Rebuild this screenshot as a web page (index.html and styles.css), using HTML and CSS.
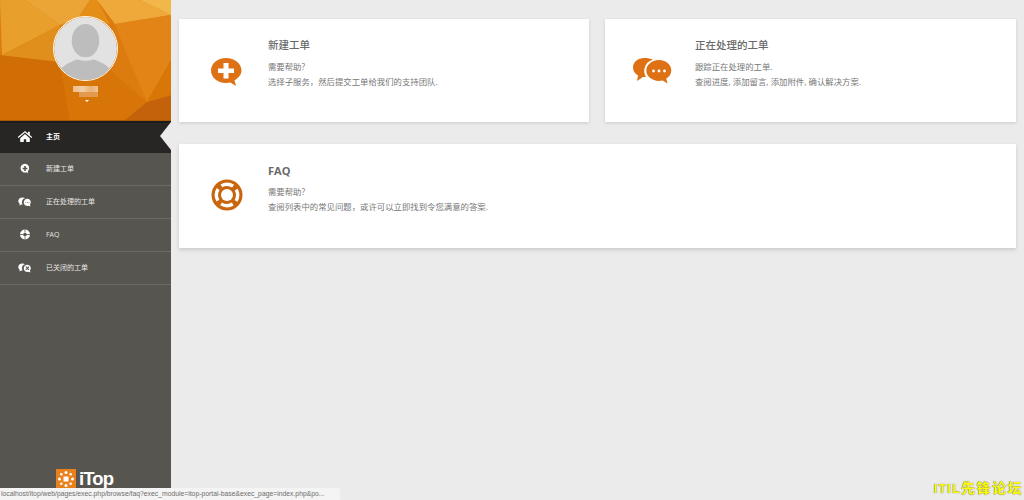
FILE: index.html
```html
<!DOCTYPE html>
<html lang="zh">
<head>
<meta charset="utf-8">
<title>iTop</title>
<link rel="stylesheet" href="styles.css">
</head>
<body>
<div class="page">
  <aside class="sidebar">
    <header class="profile">
      <svg class="profile-bg" viewBox="0 0 171 120" preserveAspectRatio="none" aria-hidden="true">
        <rect width="171" height="120" fill="#dc7c10"/>
        <polygon points="0,0 25,0 60,25 2,55" fill="#e99f2c"/>
        <polygon points="25,0 90,0 78,18 60,25" fill="#eba436"/>
        <polygon points="78,18 90,0 97,0 110,24" fill="#e48e18"/>
        <polygon points="97,0 140,0 171,15 115,24" fill="#eea93a"/>
        <polygon points="140,0 171,0 171,15" fill="#f1b748"/>
        <polygon points="115,24 171,15 171,60 147,102 125,50" fill="#e28516"/>
        <polygon points="0,55 60,62 70,120 0,120" fill="#d06d05"/>
        <polygon points="0,55 2,55 60,25 60,62" fill="#e18f1c"/>
        <polygon points="60,62 110,70 147,102 125,120 70,120" fill="#d87508"/>
        <polygon points="147,102 171,95 171,120 125,120" fill="#c3620a"/>
        <polygon points="147,102 171,60 171,95" fill="#d87608"/>
      </svg>
      <div class="avatar">
        <svg viewBox="0 0 64 64" aria-hidden="true">
          <circle cx="32" cy="32" r="32" fill="#e2e2e2"/>
          <ellipse cx="32" cy="24" rx="14" ry="17" fill="#bdbdbd"/>
          <path d="M7 54c3-6 10-8 17-11 3 2 13 2 16 0 7 3 14 5 17 11a32 32 0 0 1-50 0z" fill="#bdbdbd"/>
        </svg>
      </div>
      <div class="user-name"><span></span><span></span></div>
      <div class="caret"></div>
    </header>
    <nav class="menu">
      <a class="menu-item is-active">
        <svg class="menu-icon" viewBox="0 0 20 16" aria-hidden="true"><path fill="#fff" d="M10 1 1 8.600l1 1.200L10 3l8 6.800 1-1.200-3-2.600V2h-2.200v2.200zM4 10.200V15h4.500v-3.500h3V15H16v-4.800L10 5z"/></svg>
        <span>主页</span>
      </a>
      <a class="menu-item">
        <svg class="menu-icon" viewBox="0 0 20 16" aria-hidden="true"><path fill="#fff" d="M10 2a5.500 5.500 0 1 0 2 10.600l2 1.200-.5-2.300A5.500 5.500 0 0 0 10 2z"/><path fill="#575550" d="M9 5h2v2h2v2h-2v2H9V9H7V7h2z"/></svg>
        <span>新建工单</span>
      </a>
      <a class="menu-item">
        <svg class="menu-icon" viewBox="0 0 20 16" aria-hidden="true"><path fill="#fff" d="M6 3a4.500 4.500 0 0 0-2.500 8.200L3 13l2.500-1.200H7A5 5 0 0 1 10 4a4.500 4.500 0 0 0-4-1z"/><path fill="#fff" d="M13 4.500a4.500 4.500 0 1 0 1.500 8.700l2.300 1-.6-2.300A4.500 4.500 0 0 0 13 4.500z"/><path fill="#575550" d="M10.500 8.500h1v1h-1zM12.500 8.500h1v1h-1zM14.500 8.500h1v1h-1z"/></svg>
        <span>正在处理的工单</span>
      </a>
      <a class="menu-item">
        <svg class="menu-icon" viewBox="0 0 20 16" aria-hidden="true"><circle cx="10" cy="8" r="6.200" fill="#fff"/><circle cx="10" cy="8" r="2.300" fill="#575550"/><path stroke="#575550" stroke-width="1" d="M10 1.500v4M10 10.500v4M3.500 8h4M12.500 8h4"/></svg>
        <span>FAQ</span>
      </a>
      <a class="menu-item">
        <svg class="menu-icon" viewBox="0 0 20 16" aria-hidden="true"><path fill="#fff" d="M6 3a4.500 4.500 0 0 0-2.500 8.200L3 13l2.500-1.200H7A5 5 0 0 1 10 4a4.500 4.500 0 0 0-4-1z"/><path fill="#fff" d="M13 4.500a4.500 4.500 0 1 0 1.500 8.700l2.300 1-.6-2.300A4.500 4.500 0 0 0 13 4.500z"/><path stroke="#575550" stroke-width="1.300" d="m11 7 4 4m0-4-4 4"/></svg>
        <span>已关闭的工单</span>
      </a>
    </nav>
    <div class="brand">
      <svg class="brand-mark" viewBox="0 0 20 20" aria-hidden="true">
        <rect width="20" height="20" fill="#e8801e"/>
        <rect x="7.500" y="7.500" width="5" height="5" fill="#fff"/>
        <g fill="#fff">
          <circle cx="10" cy="3.500" r="1.500"/><circle cx="10" cy="16.500" r="1.500"/>
          <circle cx="3.500" cy="10" r="1.500"/><circle cx="16.500" cy="10" r="1.500"/>
          <circle cx="5.300" cy="5.300" r="1.300"/><circle cx="14.700" cy="5.300" r="1.300"/>
          <circle cx="5.300" cy="14.700" r="1.300"/><circle cx="14.700" cy="14.700" r="1.300"/>
        </g>
      </svg>
      <span class="brand-name">iTop</span>
    </div>
  </aside>
  <main class="content">
    <section class="tile">
      <div class="tile-icon">
        <svg viewBox="0 0 34 30" aria-hidden="true"><path fill="#dd7113" d="M16 0C7.200 0 1 5.700 1 12.500S7.200 25 16 25c1.500 0 3-.2 4.300-.5L26 28l-1.500-5.700C28.500 20 31.500 16.500 31.500 12.500 31.500 5.700 24.800 0 16 0z"/><path fill="#fff" d="M13.500 5h5v5.500H24v4.500h-5.500v5.500h-5V15H8v-4.500h5.500z"/></svg>
      </div>
      <div class="tile-body">
        <h2>新建工单</h2>
        <p>需要帮助?</p>
        <p>选择子服务，然后提交工单给我们的支持团队.</p>
      </div>
    </section>
    <section class="tile">
      <div class="tile-icon">
        <svg viewBox="0 0 40 28" aria-hidden="true"><path fill="#dd7113" d="M11 0C5 0 0 4 0 9.500c0 3.500 2 6.500 5 8L4 23l6-4h3C9 13 12 3 20 2c-2-1.500-5-2-9-2z"/><path fill="#dd7113" stroke="#fff" stroke-width="1.200" d="M26 1.500c-7.500 0-13.300 5-13.300 11s5.800 11 13.300 11c1.300 0 2.500-.1 3.600-.4l5.900 4-1.600-6.300c3-2 5-4.800 5-8.300 0-6-5.500-11-12.900-11z"/><g fill="#fff"><circle cx="20.500" cy="13" r="1.400"/><circle cx="26" cy="13" r="1.400"/><circle cx="31.500" cy="13" r="1.400"/></g></svg>
      </div>
      <div class="tile-body tile-body-wide-icon">
        <h2>正在处理的工单</h2>
        <p>跟踪正在处理的工单.</p>
        <p>查阅进度, 添加留言, 添加附件, 确认解决方案.</p>
      </div>
    </section>
    <section class="tile tile-full">
      <div class="tile-icon">
        <svg viewBox="0 0 32 32" aria-hidden="true"><circle cx="16" cy="16" r="15.500" fill="#c9650f"/><circle cx="16" cy="16" r="6" fill="#fff"/><circle cx="16" cy="16" r="10.700" fill="none" stroke="#fff" stroke-width="3.400" stroke-dasharray="12.300 4.500" stroke-dashoffset="6.150"/></svg>
      </div>
      <div class="tile-body">
        <h2 class="latin">FAQ</h2>
        <p>需要帮助?</p>
        <p>查阅列表中的常见问题，或许可以立即找到令您满意的答案.</p>
      </div>
    </section>
  </main>
</div>
<div class="status-url">localhost/itop/web/pages/exec.php/browse/faq?exec_module=itop-portal-base&amp;exec_page=index.php&amp;po...</div>
<div class="watermark"><span class="watermark-latin">ITIL</span><span>先锋论坛</span></div>
</body>
</html>
```
FILE: styles.css
```css
* { box-sizing: border-box; }
html, body { margin: 0; height: 100%; overflow: hidden; }
body {
  background: #ebebeb;
  color: #777;
  font-family: "Open Sans", "Noto Sans CJK SC", sans-serif;
}
.page { display: flex; height: 500px; }

.sidebar {
  display: flex;
  flex-direction: column;
  width: 171px;
  flex: none;
  background: #575550;
}
.profile {
  position: relative;
  height: 121px;
  display: flex;
  flex-direction: column;
  align-items: center;
  padding-top: 16px;
  border-bottom: 1px solid #a85a08;
  overflow: hidden;
}
.profile-bg { position: absolute; inset: 0; width: 100%; height: 100%; }
.avatar {
  position: relative;
  width: 65px;
  height: 65px;
  border: 1px solid #fff;
  border-radius: 50%;
  overflow: hidden;
}
.avatar svg { display: block; width: 100%; height: 100%; }
.user-name {
  position: relative;
  display: flex;
  flex-direction: column;
  align-items: center;
  margin-top: 5px;
}
.user-name span:first-child { width: 25px; height: 6px; background: linear-gradient(90deg, #efbd8a, #f3cfa6 40%, #ecb273 70%, #f0c596); }
.user-name span:last-child { width: 19px; height: 5px; margin-left: 6px; background: #e39a4e; }
.caret {
  position: relative;
  width: 0;
  height: 0;
  margin-top: 3px;
  margin-left: 2px;
  border: 2.500px solid transparent;
  border-top-color: #fff;
  border-bottom: 0;
}
.menu { display: flex; flex-direction: column; }
.menu-item {
  display: flex;
  align-items: center;
  height: 33px;
  padding: 0 0 2px 17px;
  gap: 13px;
  border-bottom: 1px solid #6c6a65;
  color: #e6e6e4;
  font-size: 7px;
}
.menu-item.is-active {
  position: relative;
  height: 32px;
  padding-bottom: 2px;
  background: #272625;
  color: #fff;
  border-bottom: 0;
  box-shadow: inset 0 2px 0 #1d1c1b;
  font-weight: 700;
}
.menu-item.is-active::after {
  content: "";
  position: absolute;
  right: 0;
  top: 1px;
  border-style: solid;
  border-width: 14px 11px 14px 0;
  border-color: transparent #ebebeb transparent transparent;
}
.menu-icon { width: 16px; height: 13px; flex: none; }
.brand {
  margin-top: auto;
  display: flex;
  align-items: flex-start;
  gap: 3px;
  height: 32px;
  padding: 1px 0 0 56px;
}
.brand-mark { width: 20px; height: 20px; flex: none; }
.brand-name {
  color: #fff;
  font: 700 18.500px/20px "Liberation Sans", sans-serif;
  letter-spacing: -.9px;
}

.content {
  flex: 1;
  display: grid;
  grid-template-columns: 410px 411px;
  grid-template-rows: 103px 104px;
  column-gap: 16px;
  row-gap: 22px;
  padding: 19px 0 0 8px;
  align-content: start;
}
.tile {
  display: flex;
  background: #fff;
  box-shadow: 0 1px 3px rgba(0, 0, 0, .14);
}
.tile-full { grid-column: 1 / 3; box-shadow: 0 2px 4px rgba(0, 0, 0, .14); }
.tile-icon {
  width: 89px;
  flex: none;
  display: flex;
  justify-content: center;
  padding-top: 39px;
}
.tile-icon svg { width: 34px; height: 30px; margin-left: 7px; }
.tile:nth-child(2) .tile-icon svg { width: 40px; height: 28px; }
.tile-full .tile-icon svg { width: 32px; height: 32px; }
.tile-full .tile-icon { padding-top: 35px; }
.tile-body { padding-top: 19px; }
.tile-body h2 {
  margin: 0 0 6px;
  color: #696969;
  font-size: 10.500px;
  font-weight: 500;
  line-height: 15px;
}
.tile-body h2.latin { font-weight: 700; font-size: 11px; }
.tile-body p {
  margin: 0;
  font-size: 8.400px;
  line-height: 15px;
  color: #777;
}
.tile-body-wide-icon { margin-left: 1px; }

.status-url {
  position: absolute;
  left: 0;
  bottom: 0;
  width: 340px;
  height: 12px;
  padding: 0 1px;
  background: #f4f4f4;
  border-top-right-radius: 2px;
  color: #6d6d6d;
  font: 6.800px/12px "Liberation Sans", sans-serif;
  white-space: nowrap;
  overflow: hidden;
}
.watermark {
  position: absolute;
  right: 1px;
  bottom: 3px;
  display: flex;
  align-items: baseline;
  color: #ffff00;
  font: 700 14px/16px "Noto Sans CJK SC", sans-serif;
  letter-spacing: 1.500px;
  text-shadow: 0 0 1px #333;
}
.watermark-latin { font: 700 12px/16px "Liberation Sans", sans-serif; letter-spacing: 1.500px; }
```
